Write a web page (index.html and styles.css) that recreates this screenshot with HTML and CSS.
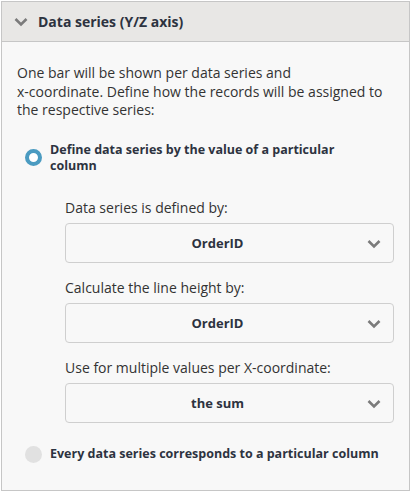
FILE: index.html
```html
<!DOCTYPE html>
<html>
<head>
<meta charset="utf-8">
<link rel="stylesheet" href="styles.css">
</head>
<body>
<div class="panel">
  <div class="header">
    <svg class="hdr-chev" width="14" height="10" viewBox="0 0 14 10"><path d="M1.5 2 L7 7.5 L12.5 2" fill="none" stroke="#7b7b7b" stroke-width="2.6"/></svg>
    <span class="hdr-title">Data series (Y/Z axis)</span>
  </div>
  <div class="body">
    <p class="intro">One bar will be shown per data series and<br>x-coordinate. Define how the records will be assigned to<br>the respective series:</p>
    <div class="option">
      <span class="radio on"></span>
      <span class="opt-label">Define data series by the value of a particular<br>column</span>
    </div>
    <div class="fields">
      <div class="field">
        <div class="field-label">Data series is defined by:</div>
        <div class="select"><span class="sel-text">OrderID</span><svg class="sel-chev" width="14" height="10" viewBox="0 0 14 10"><path d="M1.5 2 L7 7.5 L12.5 2" fill="none" stroke="#7b7b7b" stroke-width="2.6"/></svg></div>
      </div>
      <div class="field">
        <div class="field-label">Calculate the line height by:</div>
        <div class="select"><span class="sel-text">OrderID</span><svg class="sel-chev" width="14" height="10" viewBox="0 0 14 10"><path d="M1.5 2 L7 7.5 L12.5 2" fill="none" stroke="#7b7b7b" stroke-width="2.6"/></svg></div>
      </div>
      <div class="field">
        <div class="field-label">Use for multiple values per X-coordinate:</div>
        <div class="select"><span class="sel-text">the sum</span><svg class="sel-chev" width="14" height="10" viewBox="0 0 14 10"><path d="M1.5 2 L7 7.5 L12.5 2" fill="none" stroke="#7b7b7b" stroke-width="2.6"/></svg></div>
      </div>
    </div>
    <div class="option single">
      <span class="radio off"></span>
      <span class="opt-label">Every data series corresponds to a particular column</span>
    </div>
  </div>
</div>
</body>
</html>
```
FILE: styles.css
```css
* { box-sizing: border-box; }
html, body { margin: 0; padding: 0; background: #ffffff; }
body { font-family: "Open Sans", "Noto Sans", sans-serif; color: #333333; }
.panel {
  margin: 1px 0 0 1px;
  width: 409px;
  height: 490px;
  border: 1px solid #c6c6c6;
  background: #f8f8f8;
  display: flex;
  flex-direction: column;
}
.header {
  height: 40px;
  background: #e8e7e5;
  border-bottom: 1px solid #c6c6c6;
  display: flex;
  align-items: center;
  padding-left: 12px;
  gap: 10px;
}
.hdr-title { font-weight: 700; font-size: 14px; color: #2d3340; }
.body { padding: 22px 12px 0 15px; }
.intro { margin: 0; font-size: 14px; line-height: 18.5px; color: #333; }
.option { display: flex; align-items: center; gap: 8px; margin-top: 22px; padding-left: 8px; }
.radio { flex: none; width: 17px; height: 17px; border-radius: 50%; }
.radio.on { border: 4px solid #4b9bc1; background: #ffffff; }
.radio.off { background: #e1e1e1; }
.opt-label { font-weight: 700; font-size: 12.5px; line-height: 16px; color: #2d3340; }
.fields { padding-left: 48px; padding-top: 24px; display: flex; flex-direction: column; gap: 15px; }
.field-label { font-size: 14px; line-height: 20px; color: #333; margin-bottom: 5px; }
.select {
  height: 40px;
  width: 329px;
  border: 1px solid #cfcfcf;
  border-radius: 4px;
  display: flex;
  align-items: center;
  position: relative;
}
.sel-text { flex: 1; text-align: center; font-weight: 700; font-size: 13px; color: #2d3340; padding-right: 24px; }
.sel-chev { position: absolute; right: 12px; top: 15px; }
.option.single { margin-top: 23px; }
```
